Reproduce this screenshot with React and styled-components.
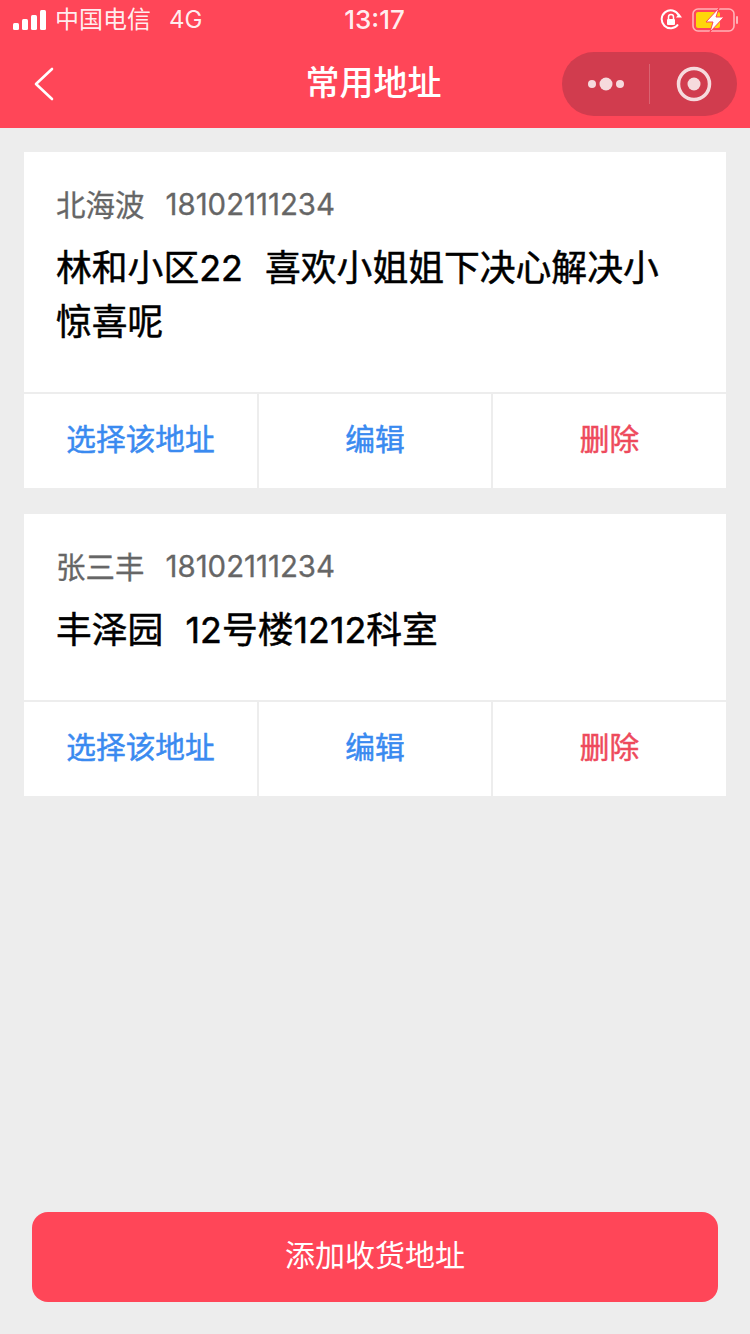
import React from "react"
import styled, { createGlobalStyle } from "styled-components"

const Global = createGlobalStyle`
html, body { margin: 0; padding: 0; background: #ededed; }
body { font-family: "Inter", "Noto Sans CJK SC", sans-serif; }
`

const Page = styled.div`
width: 750px;
height: 1334px;
display: flex;
flex-direction: column;
background: #ededed;
overflow: hidden;
`

const Top = styled.header`
background: #ff4658;
color: #fff;
height: 128px;
flex: none;
`

const StatusBar = styled.div`
height: 40px;
display: grid;
grid-template-columns: 1fr auto 1fr;
align-items: center;
padding: 0 12px 0 13px;
font-size: 24px;
line-height: 40px;
color: rgba(255,255,255,.92);
`

const StatusLeft = styled.div`
display: flex;
align-items: center;
`

const Carrier = styled.span`
margin-left: 8px;
width: 114px;
`

const Clock = styled.span`
font-size: 26px;
font-weight: 500;
padding-right: 2px;
`

const StatusRight = styled.div`
display: flex;
justify-content: flex-end;
align-items: center;
gap: 10px;
`

const NavBar = styled.div`
height: 88px;
display: grid;
grid-template-columns: 1fr auto 1fr;
align-items: center;
padding: 0 13px;
`

const BackLink = styled.div`
padding-left: 20px;
display: flex;
`

const Title = styled.div`
font-size: 34px;
font-weight: 500;
line-height: 46px;
padding: 0 3px 3px 0;
`

const Capsule = styled.div`
justify-self: end;
width: 175px;
height: 64px;
border-radius: 32px;
background: #d13c4e;
display: flex;
align-items: center;
`

const CapsulePart = styled.div`
flex: 1;
height: 100%;
display: flex;
align-items: center;
justify-content: center;
& + & { height: 40px; border-left: 1px solid rgba(255,255,255,.2); }
`

const List = styled.main`
flex: 1;
padding: 24px 24px 0;
display: flex;
flex-direction: column;
gap: 26px;
`

const Card = styled.section`
background: #fff;
`

const Info = styled.div`
height: ${p => p.$height}px;
box-sizing: border-box;
padding: 32px 36px 0 32px;
border-bottom: 2px solid #ededed;
`

const Contact = styled.div`
color: #666;
font-size: 29.5px;
line-height: 42px;
display: flex;
gap: 21px;
-webkit-text-stroke: .3px #666;
`

const Phone = styled.span`
font-size: 29.4px;
`

const Address = styled.div`
color: #000;
font-size: 35.8px;
line-height: 54px;
margin-top: 15px;
white-space: pre-wrap;
word-spacing: 1px;
-webkit-text-stroke: .5px #000;
`

const Actions = styled.div`
display: grid;
grid-template-columns: 233px 234px 235px;
height: ${p => p.$height}px;
`

const Action = styled.div`
display: flex;
align-items: center;
justify-content: center;
padding-bottom: 8px;
font-size: 29.7px;
color: ${p => p.$danger ? "#ee4a5c" : "#3a8af0"};
-webkit-text-stroke: .5px ${p => p.$danger ? "#ee4a5c" : "#3a8af0"};
& + & { border-left: 2px solid #ededed; }
`

const Footer = styled.div`
padding: 0 32px 32px;
`

const AddButton = styled.div`
height: 90px;
box-sizing: border-box;
padding-bottom: 8px;
border-radius: 16px;
background: #ff4658;
color: #fff;
font-size: 30px;
display: flex;
align-items: center;
justify-content: center;
`

const Signal = () => (
  <svg width="34" height="20" viewBox="0 0 34 20" fill="#fff">
    <rect x="0" y="13" width="6" height="7" rx="1.5" />
    <rect x="9" y="9" width="6" height="11" rx="1.5" />
    <rect x="18" y="5" width="6" height="15" rx="1.5" />
    <rect x="27" y="0" width="6" height="20" rx="1.5" />
  </svg>
)

const RotationLock = () => (
  <svg width="22" height="22" viewBox="0 0 22 22" fill="none">
    <path d="M18 15.5A9 9 0 1 1 18.6 6" stroke="#fff" strokeWidth="2" />
    <path d="M16 8.5h6l-3-4z" fill="#fff" />
    <rect x="7" y="10" width="8" height="6" rx="1" fill="#fff" />
    <path d="M8.5 10V8a2.5 2.5 0 0 1 5 0v2" stroke="#fff" strokeWidth="1.5" />
  </svg>
)

const Battery = () => (
  <svg width="46" height="24" viewBox="0 0 46 24" fill="none">
    <rect x="1" y="1" width="41" height="22" rx="5" stroke="#ffb2b8" strokeWidth="1.6" />
    <rect x="44" y="8" width="2" height="8" rx="1" fill="#ffb2b8" />
    <rect x="4" y="4" width="24" height="16" rx="2" fill="#ffd60a" />
    <path d="M27 0 14 14h7l-3 10 14-15h-8z" fill="#fff" stroke="#ff4658" strokeWidth="1" />
  </svg>
)

const Back = () => (
  <svg width="22" height="36" viewBox="0 0 22 36" fill="none">
    <path d="M19 3 3 18l16 15" stroke="#fff" strokeWidth="2.6" strokeLinecap="round" strokeLinejoin="round" />
  </svg>
)

const Dots = () => (
  <svg width="38" height="16" viewBox="0 0 38 16" fill="#f6dadd">
    <circle cx="5" cy="8" r="4" />
    <circle cx="19" cy="8" r="6.5" />
    <circle cx="33" cy="8" r="4" />
  </svg>
)

const Target = () => (
  <svg width="36" height="36" viewBox="0 0 36 36" fill="none">
    <circle cx="18" cy="18" r="15.5" stroke="#f6dadd" strokeWidth="3.5" />
    <circle cx="18" cy="18" r="6.5" fill="#f6dadd" />
  </svg>
)

const addresses = [
  { name: "北海波", phone: "18102111234", text: "林和小区22  喜欢小姐姐下决心解决小惊喜呢", info: 242, actions: 94 },
  { name: "张三丰", phone: "18102111234", text: "丰泽园  12号楼1212科室", info: 188, actions: 94 },
]

export default function App() {
  return (
    <Page>
      <Global />
      <Top>
        <StatusBar>
          <StatusLeft>
            <Signal />
            <Carrier>中国电信</Carrier>
            <span>4G</span>
          </StatusLeft>
          <Clock>13:17</Clock>
          <StatusRight>
            <RotationLock />
            <Battery />
          </StatusRight>
        </StatusBar>
        <NavBar>
          <BackLink><Back /></BackLink>
          <Title>常用地址</Title>
          <Capsule>
            <CapsulePart><Dots /></CapsulePart>
            <CapsulePart><Target /></CapsulePart>
          </Capsule>
        </NavBar>
      </Top>
      <List>
        {addresses.map(a => (
          <Card key={a.name}>
            <Info $height={a.info}>
              <Contact><span>{a.name}</span><Phone>{a.phone}</Phone></Contact>
              <Address>{a.text}</Address>
            </Info>
            <Actions $height={a.actions}>
              <Action>选择该地址</Action>
              <Action>编辑</Action>
              <Action $danger>删除</Action>
            </Actions>
          </Card>
        ))}
      </List>
      <Footer>
        <AddButton>添加收货地址</AddButton>
      </Footer>
    </Page>
  )
}
